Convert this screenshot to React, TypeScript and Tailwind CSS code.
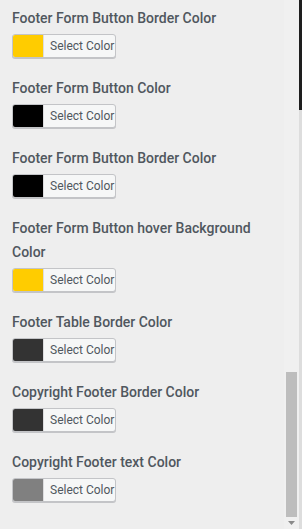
const fields = [
  { label: "Footer Form Button Border Color", color: "#ffcc00" },
  { label: "Footer Form Button Color", color: "#000000" },
  { label: "Footer Form Button Border Color", color: "#000000" },
  { label: "Footer Form Button hover Background Color", color: "#ffcc00" },
  { label: "Footer Table Border Color", color: "#333333" },
  { label: "Copyright Footer Border Color", color: "#333333" },
  { label: "Copyright Footer text Color", color: "#808080" },
];

function ColorButton({ color }: { color: string }) {
  return (
    <button
      type="button"
      className="flex h-[24px] w-[104px] overflow-hidden rounded-[3px] border border-[#c3c4c7] bg-[#f6f7f7] shadow-[0_1px_0_#c3c4c7] p-0"
    >
      <span className="block h-full w-[30px] shrink-0" style={{ background: color }} />
      <span className="flex h-full flex-1 items-center border-l border-[#dcdcde] pl-[6px] text-[12px] leading-none text-[#50575e]">
        Select Color
      </span>
    </button>
  );
}

export default function App() {
  return (
    <div
      className="flex h-[529px] w-[302px] overflow-hidden bg-[#eeeeee]"
      style={{ fontFamily: "Roboto, 'Noto Sans', sans-serif" }}
    >
      <div className="flex flex-1 flex-col gap-[18px] pl-[12px] pr-[10px] pt-[6px]">
        {fields.map(({ label, color }, i) => (
          <div key={i} className="flex flex-col gap-[4px]">
            <p className="text-[14px] font-medium leading-[24px] text-[#50575e]">
              {label}
            </p>
            <ColorButton color={color} />
          </div>
        ))}
      </div>
      <div className="flex w-[15px] flex-col items-center bg-[#f0f0f0]">
        <div className="flex-1" />
        <div className="h-[145px] w-[11px] bg-[#bdbdbd]" />
        <div className="flex h-[12px] items-center justify-center">
          <svg width="7" height="4" viewBox="0 0 7 4">
            <path d="M0 0h7L3.5 4z" fill="#8a8a8a" />
          </svg>
        </div>
      </div>
      <div className="flex w-[3px] flex-col">
        <div className="h-[110px] bg-[#1e1e1e]" />
        <div className="flex-1 bg-[#dddddd]" />
      </div>
    </div>
  );
}
